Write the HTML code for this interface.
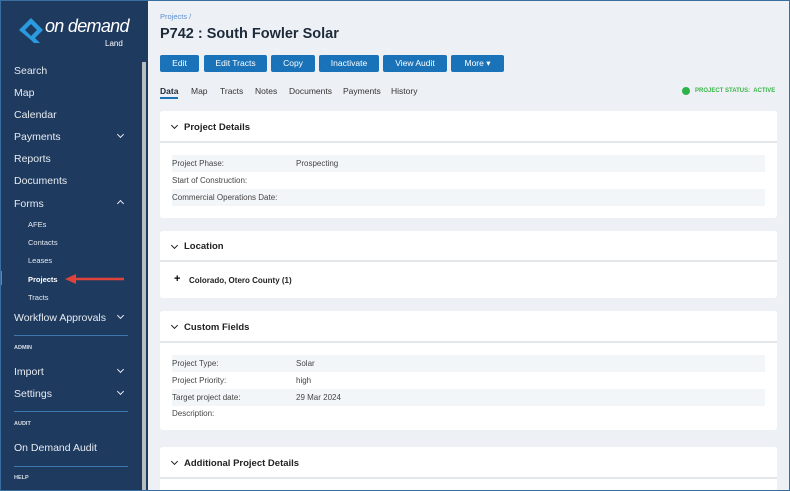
<!DOCTYPE html>
<html><head><style>
*{box-sizing:border-box;margin:0;padding:0}
html{overflow:hidden;width:790px;height:491px}
body{width:790px;height:491px;overflow:hidden;background:#edf1f5;font-family:"Liberation Sans",sans-serif;position:relative}
.frame{position:absolute;inset:0;border:1px solid #3a6ea0;z-index:10;pointer-events:none}
.sb{position:absolute;left:0;top:0;width:148px;height:491px;background:#1f3a5f;color:#e8edf3;overflow:hidden}
.scroll{position:absolute;left:142px;top:62px;width:4px;height:428px;background:#b9bdc2}
.n{position:absolute;left:14px;font-size:10.5px;color:#e6ebf1}
.s{position:absolute;left:28px;font-size:7.5px;color:#e6ebf1}
.h{position:absolute;left:14px;font-size:5.5px;font-weight:bold;color:#d6dde6}
.ch{position:absolute;left:118px;width:5px;height:5px;border-right:1.5px solid #e6ebf1;border-bottom:1.5px solid #e6ebf1;transform:rotate(45deg)}
.ch.up{transform:rotate(-135deg)}
.ln{position:absolute;left:14px;width:114px;height:1px;background:#3d78b0}
.btn{position:absolute;top:55px;height:17px;background:#1a73b8;color:#fff;font-size:8.5px;border-radius:2px;text-align:center;line-height:17px}
.tab{position:absolute;top:86px;font-size:8.5px;color:#333}
.card{position:absolute;left:160px;width:617px;background:#fff;border-radius:3px;overflow:hidden}
.ctit{position:absolute;left:24px;font-size:9.5px;font-weight:bold;color:#222}
.cv{position:absolute;left:12px;width:5px;height:5px;border-right:1.5px solid #222;border-bottom:1.5px solid #222;transform:rotate(45deg)}
.sep{position:absolute;left:0;right:0;height:2px;background:#e4e7ea}
.row{position:absolute;left:12px;width:593px;height:17px;font-size:8px;color:#444;line-height:17px}
.row.g{background:#f3f6f8}
.row span{position:absolute;left:124px}
</style></head><body>
<div class="sb">
<svg style="position:absolute;left:16px;top:16px" width="30" height="30" viewBox="0 0 30 30"><path d="M15 2 L27 14 L19 22 L24 27 L18 27 L15 24 L3 14 Z M15 8 L9 14 L15 20 L21 14 Z" fill="#2a9be0" fill-rule="evenodd"/></svg>
<div style="position:absolute;left:45px;top:16px;font-size:18px;font-style:italic;color:#fff;letter-spacing:-0.7px">on demand</div>
<div style="position:absolute;left:105px;top:39px;font-size:8px;color:#fff">Land</div>
<div class="n" style="top:65px">Search</div>
<div class="n" style="top:87px">Map</div>
<div class="n" style="top:109px">Calendar</div>
<div class="n" style="top:131px">Payments</div><div class="ch" style="top:132px"></div>
<div class="n" style="top:153px">Reports</div>
<div class="n" style="top:175px">Documents</div>
<div class="n" style="top:198px">Forms</div><div class="ch up" style="top:201px"></div>
<div class="s" style="top:220px">AFEs</div>
<div class="s" style="top:238px">Contacts</div>
<div class="s" style="top:256px">Leases</div>
<div style="position:absolute;left:0;top:271px;width:2px;height:14px;background:#2a9be0"></div>
<div class="s" style="top:275px;font-weight:bold;color:#fff">Projects</div>
<svg style="position:absolute;left:62px;top:273px" width="64" height="12"><path d="M62 6 L12 6" stroke="#e0433a" stroke-width="2.5"/><path d="M3 6 L14 1 L14 11 Z" fill="#e0433a"/></svg>
<div class="s" style="top:293px">Tracts</div>
<div class="n" style="top:312px">Workflow Approvals</div><div class="ch" style="top:313px"></div>
<div class="ln" style="top:335px"></div>
<div class="h" style="top:345px">ADMIN</div>
<div class="n" style="top:366px">Import</div><div class="ch" style="top:367px"></div>
<div class="n" style="top:388px">Settings</div><div class="ch" style="top:389px"></div>
<div class="ln" style="top:411px"></div>
<div class="h" style="top:421px">AUDIT</div>
<div class="n" style="top:442px">On Demand Audit</div>
<div class="ln" style="top:466px"></div>
<div class="h" style="top:475px">HELP</div>
<div class="scroll"></div>
</div>
<div style="position:absolute;left:160px;top:12px;font-size:7.5px;color:#5b8fd0">Projects /</div>
<div style="position:absolute;left:160px;top:26px;font-size:14.5px;font-weight:bold;color:#1d2a3a">P742 : South Fowler Solar</div>
<div class="btn" style="left:160px;width:39px">Edit</div>
<div class="btn" style="left:204px;width:63px">Edit Tracts</div>
<div class="btn" style="left:271px;width:44px">Copy</div>
<div class="btn" style="left:319px;width:60px">Inactivate</div>
<div class="btn" style="left:383px;width:64px">View Audit</div>
<div class="btn" style="left:451px;width:53px">More ▾</div>
<div class="tab" style="left:160px;font-weight:bold;color:#1d2a3a">Data</div>
<div style="position:absolute;left:160px;top:97px;width:18px;height:1.5px;background:#1a73b8"></div>
<div class="tab" style="left:191px">Map</div>
<div class="tab" style="left:220px">Tracts</div>
<div class="tab" style="left:255px">Notes</div>
<div class="tab" style="left:289px">Documents</div>
<div class="tab" style="left:343px">Payments</div>
<div class="tab" style="left:391px">History</div>
<div style="position:absolute;left:682px;top:87px;width:8px;height:8px;border-radius:50%;background:#2db34a"></div>
<div style="position:absolute;left:695px;top:88px;font-size:6px;font-weight:bold;color:#3bb54a">PROJECT STATUS:&nbsp; ACTIVE</div>

<div class="card" style="top:111px;height:107px">
<div class="cv" style="top:12px"></div><div class="ctit" style="top:11px">Project Details</div>
<div class="sep" style="top:30px"></div>
<div class="row g" style="top:44px">Project Phase:<span>Prospecting</span></div>
<div class="row" style="top:61px">Start of Construction:</div>
<div class="row g" style="top:78px">Commercial Operations Date:</div>
</div>
<div class="card" style="top:231px;height:67px">
<div class="cv" style="top:12px"></div><div class="ctit" style="top:10px">Location</div>
<div class="sep" style="top:29px"></div>
<div style="position:absolute;left:14px;top:42px;font-size:11px;font-weight:bold">+</div>
<div style="position:absolute;left:29px;top:45px;font-size:8px;font-weight:bold;color:#222">Colorado, Otero County (1)</div>
</div>
<div class="card" style="top:311px;height:119px">
<div class="cv" style="top:12px"></div><div class="ctit" style="top:11px">Custom Fields</div>
<div class="sep" style="top:30px"></div>
<div class="row g" style="top:44px">Project Type:<span>Solar</span></div>
<div class="row" style="top:61px">Project Priority:<span>high</span></div>
<div class="row g" style="top:78px">Target project date:<span>29 Mar 2024</span></div>
<div class="row" style="top:94px">Description:</div>
</div>
<div class="card" style="top:447px;height:44px">
<div class="cv" style="top:12px"></div><div class="ctit" style="top:11px">Additional Project Details</div>
<div class="sep" style="top:30px"></div>
</div>
<div class="frame"></div>
</body></html>
